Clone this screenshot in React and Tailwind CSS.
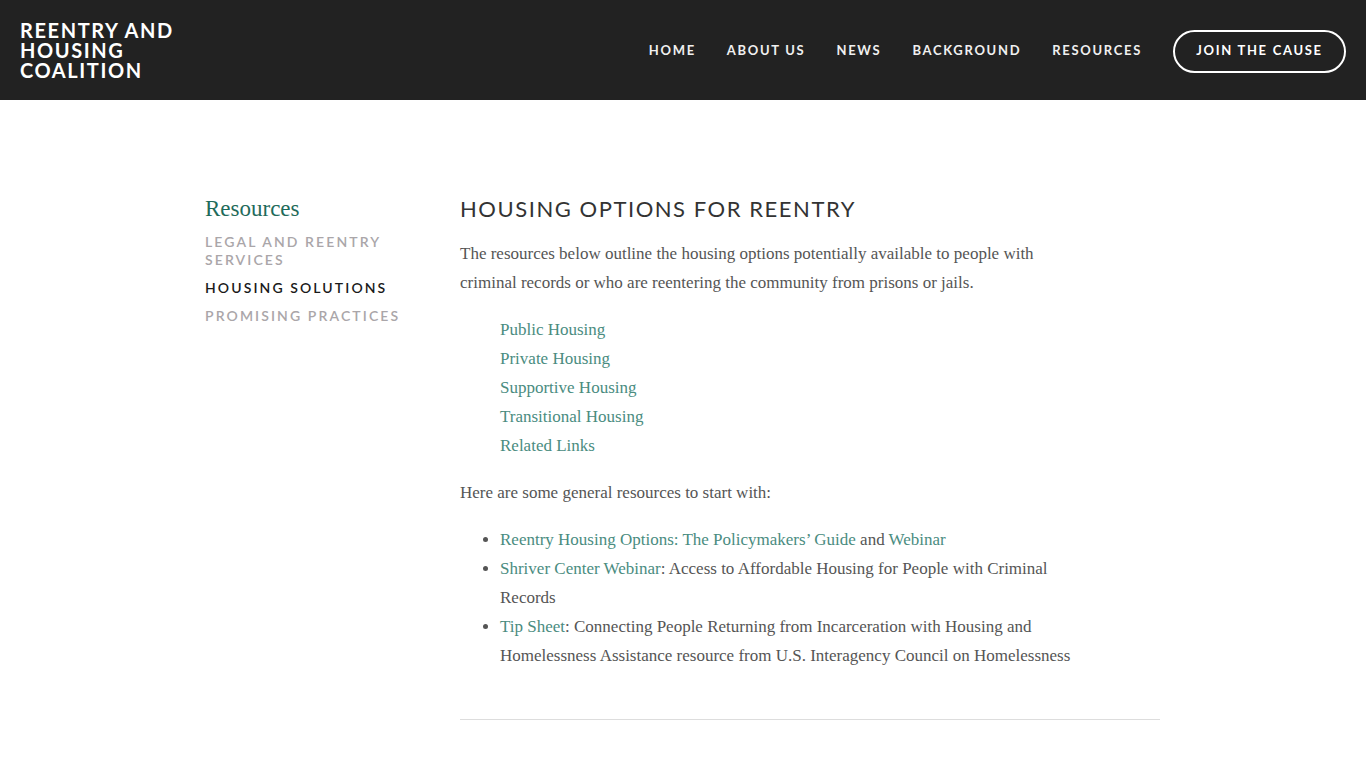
import React from "react";

const sans = "font-['Lato','Open_Sans',sans-serif]";
const serif = "font-['Liberation_Serif','DejaVu_Serif',serif]";

const navItems = ["Home", "About Us", "News", "Background", "Resources"];

const housingLinks = [
  "Public Housing",
  "Private Housing",
  "Supportive Housing",
  "Transitional Housing",
  "Related Links",
];

const Link = ({ children }) => (
  <a href="#" className="text-[#4a8c7f]">
    {children}
  </a>
);

export default function App() {
  return (
    <div className="min-h-[768px] bg-white">
      {/* header */}
      <header className={`h-[100px] bg-[#222222] flex items-center justify-between pl-5 pr-5 ${sans}`}>
        <div className="text-white font-bold text-[20px] leading-[20px] tracking-[0.08em] uppercase">
          <div>Reentry and</div>
          <div>Housing</div>
          <div>Coalition</div>
        </div>
        <nav className="flex items-center pt-[2px]">
          {navItems.map((item) => (
            <a
              key={item}
              href="#"
              className="text-[#f0f0f0] font-bold text-[13px] tracking-[0.13em] uppercase mr-[31px]"
            >
              {item}
            </a>
          ))}
          <a
            href="#"
            className="h-[43px] w-[173px] flex items-center justify-center rounded-full border-2 border-white text-white font-bold text-[13px] tracking-[0.13em] uppercase"
          >
            Join the Cause
          </a>
        </nav>
      </header>

      {/* content */}
      <div className="flex pt-[94px] pl-[205px]">
        <aside className="w-[255px] shrink-0">
          <h2 className={`${serif} text-[#1f6b5b] text-[23px] leading-[30px]`}>Resources</h2>
          <ul className={`${sans} mt-[9px] text-[14px] leading-[18px] tracking-[0.15em] uppercase font-semibold`}>
            <li className="text-[#aaa6a9] w-[200px]">Legal and Reentry Services</li>
            <li className="text-[#1a1a1a] mt-[10px]">Housing Solutions</li>
            <li className="text-[#aaa6a9] mt-[10px]">Promising Practices</li>
          </ul>
        </aside>

        <main className="w-[700px]">
          <h1 className={`${sans} text-[22px] leading-[30px] tracking-[0.07em] text-[#333] uppercase`}>
            Housing Options for Reentry
          </h1>
          <div className={`${serif} text-[#555] text-[17px] leading-[29px] mt-[15px] w-[625px]`}>
            <p>
              The resources below outline the housing options potentially available to people with
              criminal records or who are reentering the community from prisons or jails.
            </p>
            <ul className="pl-10 mt-[18px]">
              {housingLinks.map((l) => (
                <li key={l}>
                  <Link>{l}</Link>
                </li>
              ))}
            </ul>
            <p className="mt-[18px]">Here are some general resources to start with:</p>
            <ul className="list-disc pl-10 mt-[18px]">
              <li>
                <Link>Reentry Housing Options: The Policymakers’ Guide</Link> and <Link>Webinar</Link>
              </li>
              <li>
                <Link>Shriver Center Webinar</Link>: Access to Affordable Housing for People with Criminal
                Records
              </li>
              <li>
                <Link>Tip Sheet</Link>: Connecting People Returning from Incarceration with Housing and
                Homelessness Assistance resource from U.S. Interagency Council on Homelessness
              </li>
            </ul>
          </div>
          <hr className="mt-[49px] border-t border-[#dddddd]" />
        </main>
      </div>
    </div>
  );
}
